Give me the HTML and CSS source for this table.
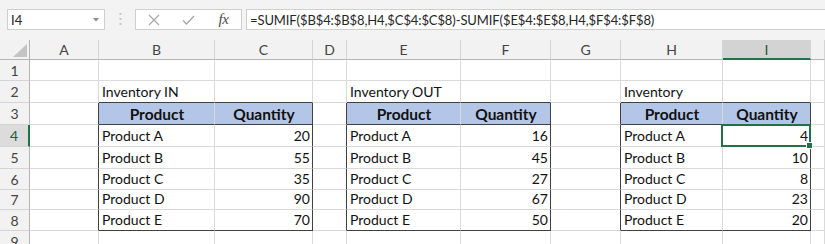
FILE: index.html
```html
<!DOCTYPE html>
<html lang="en">
<head>
<meta charset="utf-8">
<title>Inventory</title>
<link rel="stylesheet" href="styles.css">
</head>
<body>
<div class="app">
  <div class="fbar">
    <div class="namebox">
      <span>I4</span>
      <svg class="caret" width="6" height="4" viewBox="0 0 6 4"><path d="M0 0H6L3 3.5Z" fill="#8a8a8a"/></svg>
    </div>
    <div class="grip">
      <svg width="3" height="13" viewBox="0 0 3 13"><rect x="0.5" y="0" width="2" height="2" fill="#c8c8c8"/><rect x="0.5" y="5" width="2" height="2" fill="#c8c8c8"/><rect x="0.5" y="10" width="2" height="2" fill="#c8c8c8"/></svg>
    </div>
    <div class="fxbox">
      <span class="fxslot"><svg width="12" height="12" viewBox="0 0 12 12"><path d="M1 1L11 11M11 1L1 11" stroke="#a6a6a6" stroke-width="1.2" fill="none"/></svg></span>
      <span class="fxslot"><svg width="13" height="10" viewBox="0 0 13 10"><path d="M1 5.5L4.5 9L12 1" stroke="#a6a6a6" stroke-width="1.3" fill="none"/></svg></span>
      <span class="fxslot fx">fx</span>
    </div>
    <div class="formula">=SUMIF($B$4:$B$8,H4,$C$4:$C$8)-SUMIF($E$4:$E$8,H4,$F$4:$F$8)</div>
  </div>

  <div class="sheet">
    <!-- column headers -->
    <div class="corner"><svg width="14" height="13" viewBox="0 0 14 13"><path d="M14 0V13H0Z" fill="#c4c4c4"/></svg></div>
    <div class="colh">A</div><div class="colh">B</div><div class="colh">C</div><div class="colh">D</div>
    <div class="colh">E</div><div class="colh">F</div><div class="colh">G</div><div class="colh">H</div>
    <div class="colh on">I</div><div class="colh"></div>

    <!-- row 1 -->
    <div class="rowh">1</div>
    <div class="c"></div><div class="c"></div><div class="c"></div><div class="c"></div><div class="c"></div>
    <div class="c"></div><div class="c"></div><div class="c"></div><div class="c"></div><div class="c"></div>

    <!-- row 2: table titles -->
    <div class="rowh">2</div>
    <div class="c"></div><div class="c tt">Inventory IN</div><div class="c tt"></div>
    <div class="c"></div><div class="c tt">Inventory OUT</div><div class="c tt"></div>
    <div class="c"></div><div class="c tt">Inventory</div><div class="c tt"></div><div class="c"></div>

    <!-- row 3: table headers -->
    <div class="rowh">3</div>
    <div class="c tl"></div><div class="c th">Product</div><div class="c th tr">Quantity</div>
    <div class="c tl"></div><div class="c th">Product</div><div class="c th tr">Quantity</div>
    <div class="c tl"></div><div class="c th">Product</div><div class="c th tr">Quantity</div><div class="c"></div>

    <!-- row 4 -->
    <div class="rowh on">4</div>
    <div class="c tl"></div><div class="c">Product A</div><div class="c num tr">20</div>
    <div class="c tl"></div><div class="c">Product A</div><div class="c num tr">16</div>
    <div class="c tl"></div><div class="c">Product A</div><div class="c num tr sel">4</div><div class="c"></div>

    <!-- row 5 -->
    <div class="rowh">5</div>
    <div class="c tl"></div><div class="c">Product B</div><div class="c num tr">55</div>
    <div class="c tl"></div><div class="c">Product B</div><div class="c num tr">45</div>
    <div class="c tl"></div><div class="c">Product B</div><div class="c num tr">10</div><div class="c"></div>

    <!-- row 6 -->
    <div class="rowh">6</div>
    <div class="c tl"></div><div class="c">Product C</div><div class="c num tr">35</div>
    <div class="c tl"></div><div class="c">Product C</div><div class="c num tr">27</div>
    <div class="c tl"></div><div class="c">Product C</div><div class="c num tr">8</div><div class="c"></div>

    <!-- row 7 -->
    <div class="rowh">7</div>
    <div class="c tl"></div><div class="c">Product D</div><div class="c num tr">90</div>
    <div class="c tl"></div><div class="c">Product D</div><div class="c num tr">67</div>
    <div class="c tl"></div><div class="c">Product D</div><div class="c num tr">23</div><div class="c"></div>

    <!-- row 8 -->
    <div class="rowh">8</div>
    <div class="c tl"></div><div class="c tb">Product E</div><div class="c num tr tb">70</div>
    <div class="c tl"></div><div class="c tb">Product E</div><div class="c num tr tb">50</div>
    <div class="c tl"></div><div class="c tb">Product E</div><div class="c num tr tb">20</div><div class="c"></div>

    <!-- row 9 -->
    <div class="rowh">9</div>
    <div class="c"></div><div class="c"></div><div class="c"></div><div class="c"></div><div class="c"></div>
    <div class="c"></div><div class="c"></div><div class="c"></div><div class="c"></div><div class="c"></div>
  </div>
</div>
</body>
</html>
```

FILE: styles.css
```css
* { box-sizing: border-box; }

html, body {
  margin: 0;
  padding: 0;
  background: #ffffff;
}

.app {
  width: 825px;
  height: 244px;
  overflow: hidden;
  font-family: Lato, "Liberation Sans", sans-serif;
}

/* ---------- formula bar ---------- */
.fbar {
  height: 40px;
  padding-top: 9px;
  background: #f3f3f3;
  display: flex;
  align-items: flex-start;
}

.namebox {
  margin-left: 7px;
  width: 98px;
  height: 21px;
  background: #ffffff;
  border: 1px solid #cfcfcf;
  display: flex;
  align-items: center;
  justify-content: space-between;
  padding: 0 5px 0 3px;
  font-size: 13px;
  color: #262626;
}

.grip {
  width: 30px;
  height: 21px;
  display: flex;
  align-items: center;
  justify-content: center;
}

.fxbox {
  width: 107px;
  height: 21px;
  background: #ffffff;
  border: 1px solid #cfcfcf;
  display: flex;
  align-items: center;
}

.fxslot {
  flex: 0 0 35px;
  height: 100%;
  display: flex;
  align-items: center;
  justify-content: center;
}

.fxslot.fx {
  flex: 1;
  font-family: "Liberation Serif", "DejaVu Serif", serif;
  font-style: italic;
  font-size: 15px;
  color: #4a4a4a;
  letter-spacing: -0.5px;
}

.formula {
  flex: 1;
  margin-left: 4px;
  height: 21px;
  background: #ffffff;
  border: 1px solid #cfcfcf;
  border-right: 0;
  padding-left: 3px;
  display: flex;
  align-items: center;
  font-size: 13px;
  letter-spacing: -0.1px;
  color: #262626;
  white-space: nowrap;
}

/* ---------- worksheet grid ---------- */
.sheet {
  display: grid;
  grid-template-columns: 30px 69px 116px 98px 34px 114px 90px 70px 102px 88px 14px;
  grid-template-rows: 20px 21px 22px 22px 22px 22px 21px 20px 21px 21px;
  font-size: 14px;
  color: #111111;
}

.corner {
  background: #f2f2f2;
  border-right: 1px solid #b5b5b5;
  border-bottom: 1px solid #b5b5b5;
  display: flex;
  align-items: flex-end;
  justify-content: flex-end;
  padding: 0 2px 2px 0;
}

.colh {
  background: #f2f2f2;
  border-right: 1px solid #d4d4d4;
  border-bottom: 1px solid #b5b5b5;
  display: flex;
  align-items: center;
  justify-content: center;
  color: #444444;
  font-size: 14px;
}

.colh.on {
  background: #d3d3d3;
  border-bottom: 2px solid #217346;
  color: #1f5c38;
}

.rowh {
  background: #f2f2f2;
  border-right: 1px solid #b5b5b5;
  border-bottom: 1px solid #d4d4d4;
  display: flex;
  align-items: center;
  justify-content: center;
  color: #444444;
  font-size: 14px;
}

.rowh.on {
  background: #dcdcdc;
  border-right: 2px solid #217346;
  color: #1f5c38;
}

.c {
  border-right: 1px solid #dadada;
  border-bottom: 1px solid #dadada;
  display: flex;
  align-items: flex-end;
  padding: 0 2px 2px 3px;
  white-space: nowrap;
}

/* table edges */
.c.tt { border-bottom-color: #404040; }
.c.tl { border-right-color: #404040; }
.c.tr { border-right-color: #404040; }
.c.tb { border-bottom-color: #404040; }

.c.th {
  background: #b4c6e7;
  border-bottom-color: #404040;
  justify-content: center;
  font-weight: 700;
  font-size: 15.5px;
  padding-bottom: 1px;
}

.c.num { justify-content: flex-end; }

/* active cell */
.c.sel { position: relative; }

.c.sel::before {
  content: "";
  position: absolute;
  left: -2px;
  top: -1px;
  right: -1px;
  bottom: -1px;
  border: 2px solid #217346;
}

.c.sel::after {
  content: "";
  position: absolute;
  right: -3px;
  bottom: -3px;
  width: 5px;
  height: 5px;
  background: #217346;
  border: 1px solid #ffffff;
}
```
